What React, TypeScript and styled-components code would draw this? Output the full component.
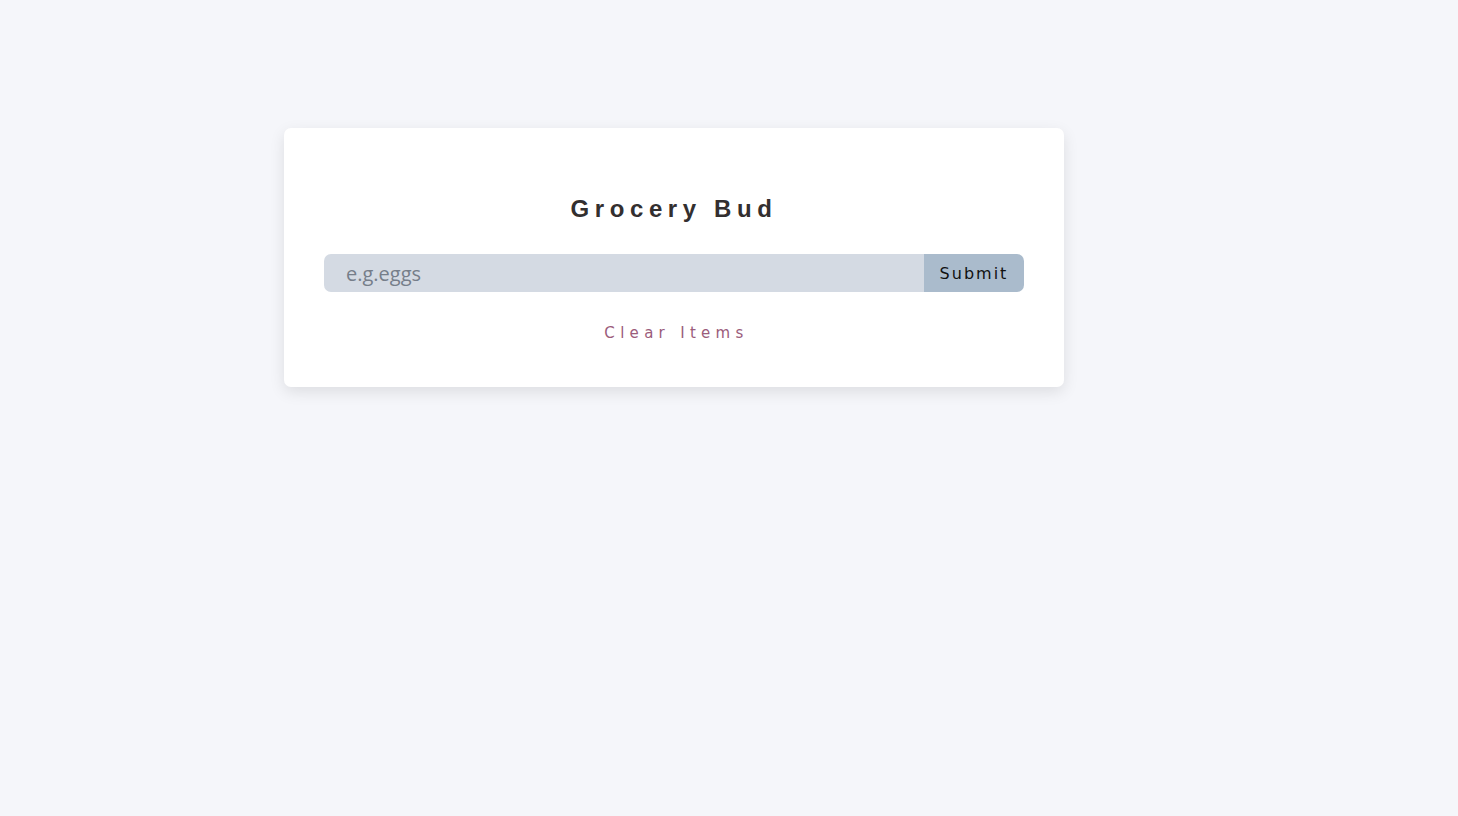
import React, { useState } from "react";
import styled, { createGlobalStyle } from "styled-components";

const GlobalStyle = createGlobalStyle`
  * { box-sizing: border-box; }
  html, body { margin: 0; padding: 0; }
  body {
    background: #f5f6fa;
    font-family: "Liberation Sans", Arial, sans-serif;
  }
`;

const Page = styled.main`
  min-height: 816px;
  padding-top: 128px;
  padding-left: 284px;
`;

const Card = styled.section`
  width: 780px;
  background: #ffffff;
  border-radius: 7px;
  box-shadow: 0 5px 15px rgba(0, 0, 0, 0.1);
  padding: 40px 40px 44px;
`;

const Form = styled.form`
  display: flex;
  flex-direction: column;
`;

const Title = styled.h3`
  margin: 26px 0 30px;
  text-align: center;
  font-family: "Liberation Sans", Arial, sans-serif;
  font-weight: 700;
  font-size: 24px;
  line-height: 30px;
  letter-spacing: 5.6px;
  color: #332f2f;
`;

const Row = styled.div`
  display: flex;
  height: 38px;
`;

const Input = styled.input`
  flex: 1;
  height: 38px;
  border: none;
  outline: none;
  background: #d4dae3;
  border-radius: 7px 0 0 7px;
  padding: 0 0 0 22px;
  font-family: "Open Sans", sans-serif;
  font-size: 20px;
  color: #333;
  &::placeholder {
    color: #767e8a;
  }
`;

const SubmitButton = styled.button`
  width: 100px;
  height: 38px;
  border: none;
  background: #aabbcc;
  border-radius: 0 7px 7px 0;
  font-family: "DejaVu Sans", Verdana, sans-serif;
  font-size: 16px;
  letter-spacing: 2px;
  color: #111;
  padding: 0;
  cursor: pointer;
`;

const ClearButton = styled.button`
  align-self: center;
  margin-top: 31px;
  background: transparent;
  border: none;
  font-family: "DejaVu Sans", Verdana, sans-serif;
  font-size: 15px;
  line-height: 20px;
  letter-spacing: 5.3px;
  color: #9b5c7b;
  padding: 0 0 0 5px;
  cursor: pointer;
`;

export default function App() {
  const [value, setValue] = useState("");
  return (
    <>
      <GlobalStyle />
      <Page>
        <Card>
          <Form onSubmit={(e) => e.preventDefault()}>
            <Title>Grocery Bud</Title>
            <Row>
              <Input
                placeholder="e.g.eggs"
                value={value}
                onChange={(e) => setValue(e.target.value)}
              />
              <SubmitButton type="submit">Submit</SubmitButton>
            </Row>
          </Form>
          <Form as="div">
            <ClearButton type="button">Clear Items</ClearButton>
          </Form>
        </Card>
      </Page>
    </>
  );
}
